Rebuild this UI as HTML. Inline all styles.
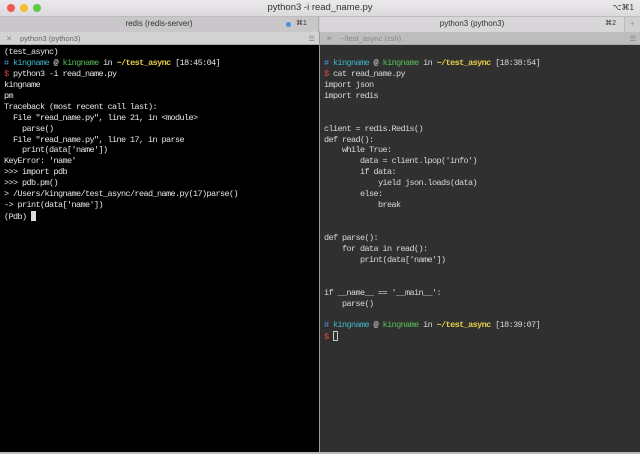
<!DOCTYPE html>
<html><head><style>
*{margin:0;padding:0;box-sizing:border-box}
body{width:640px;height:454px;overflow:hidden;background:#cfcdcf;font-family:"Liberation Sans",sans-serif;position:relative}
.title{position:absolute;left:0;top:0;width:640px;height:16px;background:linear-gradient(#ebe9eb,#dcdadc);font-size:9.5px;color:#333;text-align:center;line-height:16px}
.dot{position:absolute;top:4px;width:8px;height:8px;border-radius:50%}
.tabs{position:absolute;top:16px;left:0;width:640px;height:16px;border-top:1px solid #bdbbbd;border-bottom:1px solid #b0aeb0;font-size:8px;color:#333;line-height:14px}
.tab{position:absolute;top:0;height:15px;text-align:center}
.ph{position:absolute;top:32px;height:13px;font-size:7.5px;color:#666;line-height:13px;padding-left:20px;border-bottom:1px solid #aaa}
.term{position:absolute;top:45px;font-family:"Liberation Mono",monospace;font-size:8.5px;letter-spacing:-0.6px;line-height:10.93px;white-space:pre;padding-left:4px;padding-top:2px}
.l{background:#000;color:#e6e6e6;left:0;width:319px;height:408px}
.r{background:#303030;color:#d8d8d8;left:320px;width:320px;height:408px}
.b{color:#5a8fe0}.c{color:#3fb8c8}.g{color:#58c058}.y{color:#e8d048;font-weight:bold}.red{color:#e04848}
.cur{display:inline-block;width:5px;height:10px;background:#ddd;vertical-align:-2px}
.cur2{display:inline-block;width:5px;height:10px;border:1px solid #ccc;vertical-align:-2px}
</style></head><body>
<div class="title">python3 -i read_name.py<span style="position:absolute;right:6px;font-size:8px">⌥⌘1</span>
<div class="dot" style="left:7px;background:#ee5a52"></div>
<div class="dot" style="left:20px;background:#f5bd30"></div>
<div class="dot" style="left:33px;background:#5ec942"></div></div>
<div class="tabs">
<div class="tab" style="left:0;width:319px;background:#c9c7c9;border-right:1px solid #aaa">redis (redis-server)<span style="position:absolute;left:286px;top:5px;width:5px;height:5px;border-radius:50%;background:#4a8de8"></span><span style="position:absolute;left:296px;font-size:7px">⌘1</span></div>
<div class="tab" style="left:320px;width:304px;background:#d8d6d8">python3 (python3)<span style="position:absolute;right:8px;font-size:7px">⌘2</span></div>
<div class="tab" style="left:624px;width:16px;background:#d0ced0;border-left:1px solid #bbb;color:#999">+</div>
</div>
<div class="ph" style="left:0;width:319px;background:#d3d3d3"><span style="position:absolute;left:6px;color:#888">✕</span>python3 (python3)<span style="position:absolute;right:4px;color:#888">☰</span></div>
<div class="ph" style="left:320px;width:320px;background:#bdbdbd;color:#888"><span style="position:absolute;left:6px">✕</span>~/test_async (zsh)<span style="position:absolute;right:4px">☰</span></div>
<div style="position:absolute;left:319px;top:32px;width:1px;height:422px;background:#999"></div>
<div class="term l">(test_async)
<span class="b">#</span> <span class="c">kingname</span> @ <span class="g">kingname</span> in <span class="y">~/test_async</span> [18:45:04]
<span class="red">$</span> python3 -i read_name.py
kingname
pm
Traceback (most recent call last):
  File "read_name.py", line 21, in &lt;module&gt;
    parse()
  File "read_name.py", line 17, in parse
    print(data['name'])
KeyError: 'name'
&gt;&gt;&gt; import pdb
&gt;&gt;&gt; pdb.pm()
&gt; /Users/kingname/test_async/read_name.py(17)parse()
-&gt; print(data['name'])
(Pdb) <span class="cur"></span></div>
<div class="term r">
<span class="b">#</span> <span class="c">kingname</span> @ <span class="g">kingname</span> in <span class="y">~/test_async</span> [18:38:54]
<span class="red">$</span> cat read_name.py
import json
import redis


client = redis.Redis()
def read():
    while True:
        data = client.lpop('info')
        if data:
            yield json.loads(data)
        else:
            break


def parse():
    for data in read():
        print(data['name'])


if __name__ == '__main__':
    parse()

<span class="b">#</span> <span class="c">kingname</span> @ <span class="g">kingname</span> in <span class="y">~/test_async</span> [18:39:07]
<span class="red">$</span> <span class="cur2"></span></div>
<div style="position:absolute;left:0;top:452px;width:640px;height:2px;background:#bbb"></div>
</body></html>
